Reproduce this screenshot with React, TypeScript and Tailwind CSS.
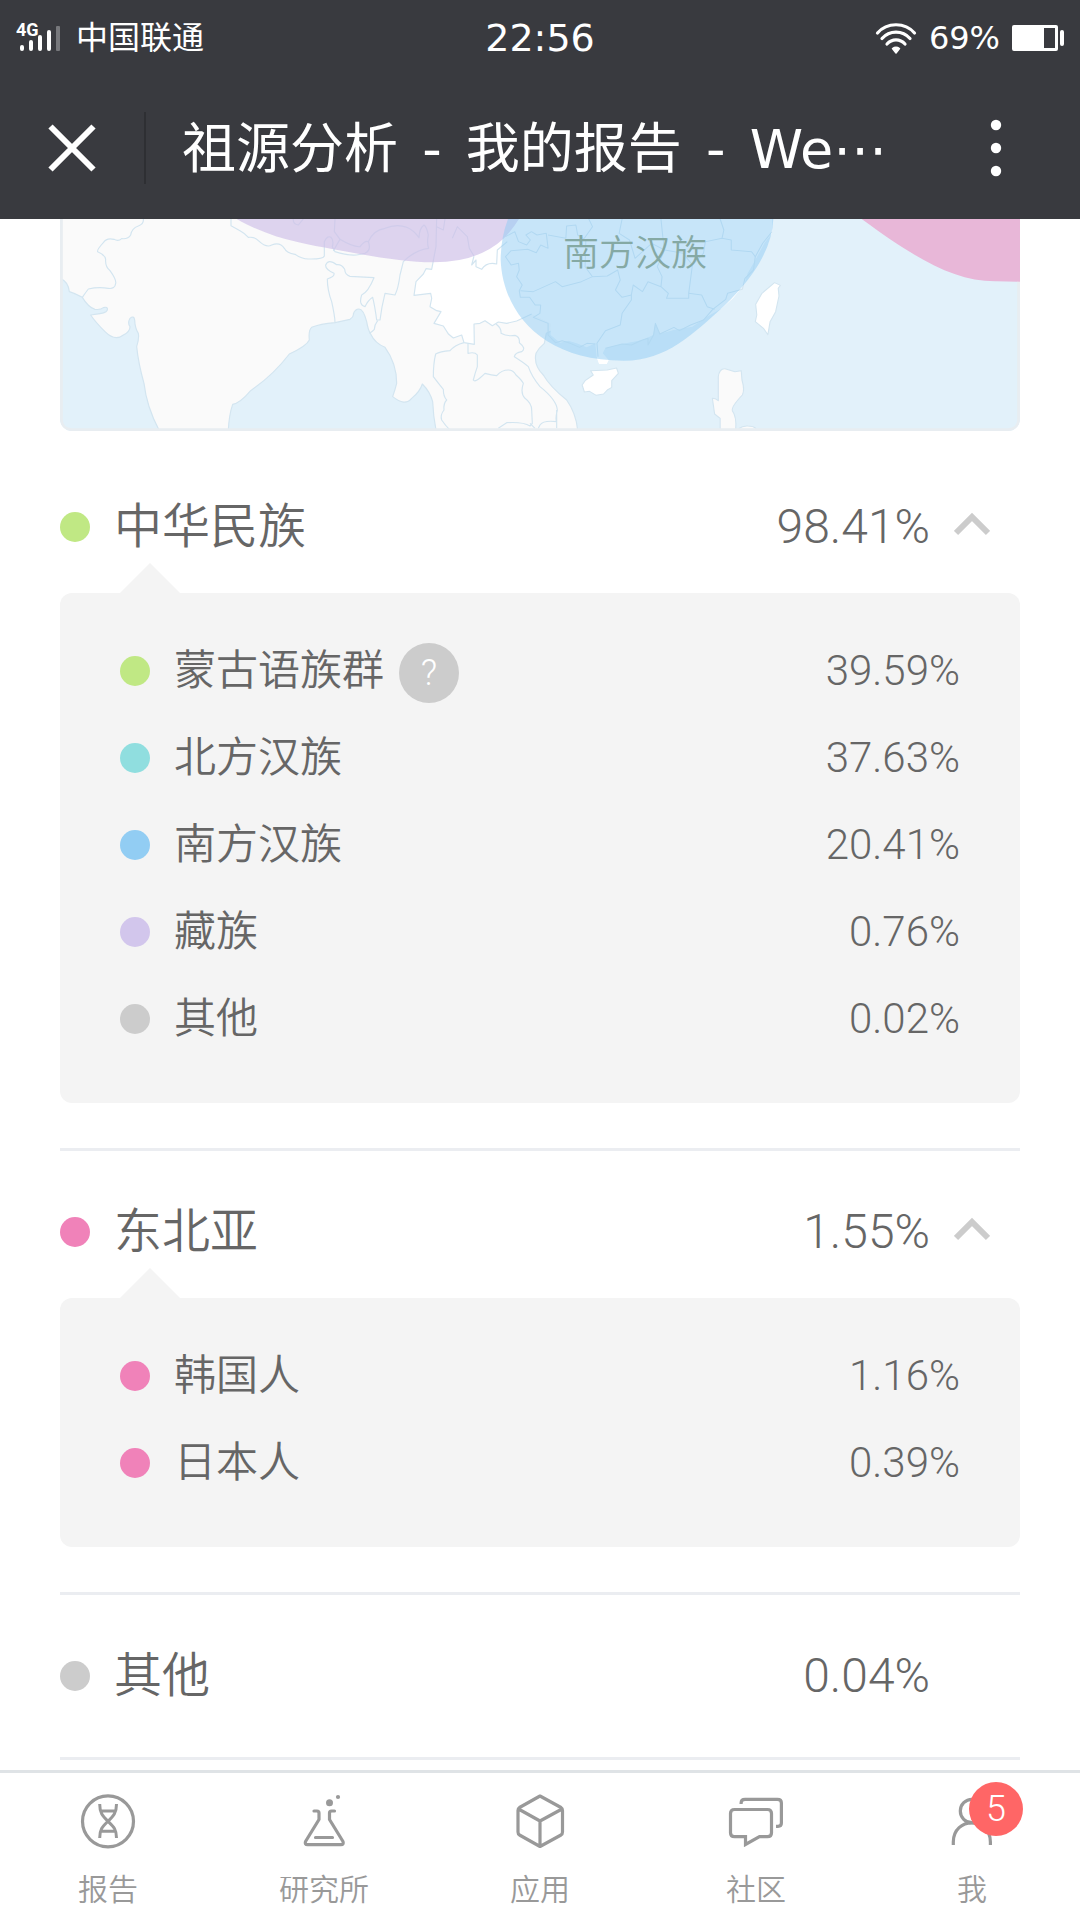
import { useState } from 'react';
import type { ReactNode } from 'react';
import clsx from 'clsx';

interface Item {
  name: string;
  value: string;
  color: string;
  help?: boolean;
}

interface Region {
  name: string;
  value: string;
  color: string;
  items: Item[];
}

const regions: Region[] = [
  {
    name: '中华民族',
    value: '98.41%',
    color: 'bg-[#c0e884]',
    items: [
      { name: '蒙古语族群', value: '39.59%', color: 'bg-[#c0e884]', help: true },
      { name: '北方汉族', value: '37.63%', color: 'bg-[#90dedf]' },
      { name: '南方汉族', value: '20.41%', color: 'bg-[#92cdf3]' },
      { name: '藏族', value: '0.76%', color: 'bg-[#d2c6ec]' },
      { name: '其他', value: '0.02%', color: 'bg-[#cccccc]' },
    ],
  },
  {
    name: '东北亚',
    value: '1.55%',
    color: 'bg-[#f082b9]',
    items: [
      { name: '韩国人', value: '1.16%', color: 'bg-[#f082b9]' },
      { name: '日本人', value: '0.39%', color: 'bg-[#f082b9]' },
    ],
  },
  { name: '其他', value: '0.04%', color: 'bg-[#cccccc]', items: [] },
];

function StatusBar() {
  return (
    <div className="grid grid-cols-3 items-center h-[76px] px-4 font-['DejaVu_Sans','Noto_Sans_CJK_SC',sans-serif]">
      <div className="flex items-center gap-4">
        <svg width="44" height="44" viewBox="0 -6 44 44" fill="#fff">
          <text x="0" y="14" fontSize="18" fontWeight="700" fontFamily="Roboto, sans-serif">
            4G
          </text>
          <rect x="4" y="23" width="4" height="6" rx="2" />
          <rect x="13" y="18" width="4" height="11" rx="2" />
          <rect x="22" y="13" width="4" height="16" rx="2" />
          <rect x="31" y="8" width="4" height="21" rx="2" />
          <rect x="40" y="4" width="4" height="25" rx="1" fill="#77787c" />
        </svg>
        <span className="text-[32px] leading-10">中国联通</span>
      </div>
      <span className="text-center text-[38px] leading-10">22:56</span>
      <div className="flex items-center justify-end gap-3">
        <svg width="42" height="34" viewBox="0 0 42 34" fill="none" stroke="#fff" strokeWidth="3.2" strokeLinecap="round">
          <path d="M2.500 12C12 1 30 1 39.500 12" />
          <path d="M7 17.500C14.500 9 27.500 9 35 17.500" />
          <path d="M12 23C17 17.500 25 17.500 30 23" />
          <path d="M17.500 27.500Q21 25 24.500 27.500L21 32Z" fill="#fff" strokeWidth="1.500" strokeLinejoin="round" />
        </svg>
        <span className="text-[32px] leading-10">69%</span>
        <svg width="52" height="26" viewBox="0 0 52 26" fill="#fff">
          <path fillRule="evenodd" d="M2 0H44a2 2 0 0 1 2 2V24a2 2 0 0 1-2 2H2a2 2 0 0 1-2-2V2a2 2 0 0 1 2-2ZM32 3V23H43V3Z" />
          <rect x="48" y="5" width="4" height="16" rx="2" />
        </svg>
      </div>
    </div>
  );
}

function TitleBar() {
  return (
    <div className="flex items-center h-[143px]">
      <button type="button" aria-label="关闭" className="flex items-center justify-center w-36 h-[72px] border-r-2 border-[#2e2f33] box-content">
        <svg width="48" height="48" viewBox="0 0 48 48" stroke="#fff" strokeWidth="6">
          <path d="M2.500 2.500L45.500 45.500M45.500 2.500L2.500 45.500" />
        </svg>
      </button>
      <h1 className="flex-1 pt-1 pl-9 text-[54px] leading-[72px] whitespace-nowrap font-['DejaVu_Sans','Noto_Sans_CJK_SC',sans-serif]">
        祖源分析 <span className="mx-[7px]">-</span> 我的报告 <span className="mx-[7px]">-</span> We⋯
      </h1>
      <button type="button" aria-label="更多" className="flex items-center justify-center w-[168px] h-[72px]">
        <svg width="12" height="58" viewBox="0 0 12 58" fill="#fff">
          <circle cx="6" cy="6" r="5.200" />
          <circle cx="6" cy="29" r="5.200" />
          <circle cx="6" cy="52" r="5.200" />
        </svg>
      </button>
    </div>
  );
}

function AncestryMap() {
  return (
    <svg viewBox="60 27 2880 636" className="block w-full rounded-b-xl" fill="none" stroke="#d3e5f0" strokeWidth="3.5" strokeLinejoin="round">
      <rect x="60" y="27" width="2880" height="636" fill="#e2f1fa" stroke="none" />

      {/* mainland */}
      <path
        fill="#fafafa"
        d="M60 0V205Q85 215 88 245Q105 250 127 262Q145 292 165 298Q182 300 190 293Q200 290 202 295Q205 307 180 311L152 315Q165 335 195 365Q225 395 250 375Q270 365 270 350Q262 340 270 325Q282 315 284 330Q285 355 295 370Q298 385 290 410Q295 460 312 520Q320 590 357 660H565Q567 615 578 583Q600 580 632 542Q700 495 748 432Q800 408 808 390Q805 360 815 352Q840 342 885 338L930 328Q942 320 940 312Q945 297 957 297Q970 297 980 335Q984 360 992 372Q1005 400 1035 412Q1070 460 1070 520Q1065 540 1058 560Q1095 590 1115 565Q1140 545 1147 522Q1170 545 1178 575Q1180 620 1188 660H1613Q1608 610 1580 570Q1530 530 1510 495Q1480 465 1488 430Q1495 415 1513 400L1519 370L1900 200V0Z"
      />

      {/* China */}
      <path
        fill="#fff"
        stroke="none"
        d="M1190 27L1188 110L1175 178L1158 176L1150 192L1128 215L1122 256L1172 250L1170 290L1203 305L1182 340L1210 348L1240 384L1265 375L1272 398L1303 403L1302 342L1320 340L1335 332L1357 347L1375 336L1400 340L1430 333L1475 312L1532 340V375L1560 398L1585 392L1610 400L1640 412L1666 400L1670 440L1678 462H1700L1706 450L1688 430L1696 415L1746 402L1807 390L1840 375L1846 340L1859 372L1901 360L1957 350L2001 320L2046 295L2079 265L2112 225L2123 190L2146 150L2173 100L2196 70V27Z"
      />

      {/* borders */}
      <path d="M310 27Q312 42 295 48Q275 55 272 75Q265 88 245 86Q235 95 222 88Q200 82 190 98Q170 120 173 125Q195 135 197 148Q195 170 210 182Q230 210 227 220Q225 238 205 235Q175 230 145 237Q135 250 127 262" />
      <path d="M573 27V47L600 62Q615 70 625 82Q645 80 655 92Q680 115 695 105Q720 95 733 115Q740 130 765 133Q785 147 805 147Q850 148 853 138V95Q862 75 873 82Q882 90 877 110L885 125Q920 137 950 135L975 130Q995 120 985 95Q1000 60 1035 55Q1070 40 1100 52Q1120 60 1137 83Q1138 55 1152 45Q1160 50 1165 75Q1160 100 1166 115Q1125 120 1090 155Q1085 175 1080 195Q1075 235 1065 255L1035 250Q1025 290 1020 330L1010 330Q1005 290 998 262Q985 270 975 290Q955 285 965 255Q985 245 1002 203L930 199Q915 195 914 178Q905 162 890 164Q865 145 857 165Q855 178 882 190Q885 200 862 207Q862 240 875 275Q885 320 885 338" />
      <path d="M1013 332Q1003 345 1003 358Q997 365 988 370M885 27L883 65L900 88L890 105L880 123M760 27Q758 42 775 45L790 27M900 88Q940 112 960 110Q975 90 985 95" />
      <path d="M1190 27L1188 110L1175 178L1158 176L1150 192L1128 215L1122 256L1172 250L1175 265L1170 290L1190 302L1203 305L1182 340L1210 348L1225 372L1240 384L1265 375L1272 398L1303 403L1302 342L1320 340L1335 332L1357 347L1375 336L1400 340L1430 333L1475 312" />
      <path d="M1272 398Q1245 405 1230 422Q1200 425 1187 432Q1180 460 1180 500Q1195 520 1210 538Q1210 560 1220 570Q1210 580 1212 600Q1200 615 1205 630Q1215 645 1228 658" />
      <path d="M1284 400V430Q1305 425 1312 435V470Q1305 490 1300 510Q1305 520 1335 490Q1355 495 1370 497Q1385 480 1405 480Q1420 480 1428 495Q1445 510 1450 520Q1440 550 1455 565Q1475 580 1475 600L1477 640L1470 648Q1450 635 1400 638L1375 655M1470 640L1485 655" />
      <path d="M1368 342Q1385 355 1383 370Q1400 380 1425 376Q1440 380 1438 398Q1460 415 1445 425Q1425 428 1423 440Q1455 460 1465 470Q1475 500 1500 530Q1550 570 1552 600Q1545 630 1550 635Q1510 630 1500 645L1495 655M1550 600V655" />
      <path d="M1190 50L1210 60L1215 27M1237 85L1252 50L1282 80L1288 115L1302 138M1302 138L1295 165L1308 150V170L1325 178Q1340 155 1370 162L1372 120L1402 95" />

      {/* province lines under the southern Han area */}
      <g transform="translate(1380 0) scale(1.11 1)" strokeWidth="3">
        <path d="M15 80L40 65L50 95L72 105L82 90L70 75L85 65L100 75L125 70L130 115L110 105L98 128L75 118L30 122L15 140L30 165L50 160L52 180L45 200L60 225L52 242L55 262L80 262L95 285L110 285L108 310L90 322L130 340V375L150 398L168 392L190 400L215 412L235 400L258 402" />
        <path d="M55 242L90 245L150 215L168 230L220 215L250 200L230 170L232 90L210 75L205 45L180 48L178 85L130 75" />
        <path d="M240 27L250 50L228 85M250 200L290 198L318 180L325 210L312 240L330 262L355 255V270L330 310L325 345L285 362L262 400L265 440" />
        <path d="M330 27L322 70L350 90L365 145L410 100L445 120L425 170L438 200L435 230L400 215L385 245L360 225L355 255M435 230L455 250L450 265L510 265V250L545 255L560 290L580 298" />
        <path d="M435 27L440 80L445 120L495 130L520 165L510 250M595 27L605 60L600 85L555 95L550 130L520 165M600 85L625 90V120L680 125L690 140" />
        <path d="M285 415L330 402L355 405L385 390L400 385V405L415 375L420 340L432 372L470 352L485 362L515 345L550 330L575 298L610 268L615 250L655 238L662 205L685 180L690 140L710 100L735 65" />
        <path fill="#fff" d="M245 482L290 480L315 474L320 490L302 512V532L290 540L280 552L260 556L242 544L228 546L222 525L230 512L252 495Z" />
        <path fill="#fff" d="M742 218L758 226L752 235L754 258L745 305L730 335L724 374L712 355L690 335L694 315L691 283L708 250Z" />
        <path fill="#fafafa" d="M595 660V625L580 612L574 565Q582 565 590 572V500Q593 475 608 476L635 485L652 482L654 510Q662 540 655 555Q625 590 628 602Q640 620 637 660ZM645 656Q655 647 670 648Q685 648 692 656" />
        <path fill="#fff" stroke="none" d="M262 445L268 462H288L293 450Z" />
      </g>

      <path d="M64 27V627Q64 659 96 659H2904Q2936 659 2936 627V27" stroke="#e8edf1" strokeWidth="9" />

      <g stroke="none">
        <path fill="#cfc0e8" fillOpacity=".68" d="M590 27C700 90 800 102 880 118C1000 140 1100 157 1180 157Q1315 157 1392 85Q1420 55 1437 27Z" />
        <path fill="#8fccf3" fillOpacity=".5" d="M1404 27Q1382 85 1382 150C1388 300 1500 452 1752 452C1880 452 1960 370 2050 290Q2196 150 2200 27Z" />
        <path fill="#e8b7d8" d="M2465 27C2620 140 2740 216 2870 214L2940 215V27Z" />
        <text x="1569" y="168" fontSize="108" fill="#85a9a4" fontWeight="350" fontFamily="'Noto Sans CJK SC', sans-serif">
          南方汉族
        </text>
      </g>
    </svg>
  );
}

function Dot({ color }: { color: string }) {
  return <span className={clsx('size-[30px] shrink-0 rounded-full', color)} />;
}

function ItemRow({ name, value, color, help }: Item) {
  return (
    <li className="flex items-center gap-6 h-[87px] text-[42px]">
      <Dot color={color} />
      <div className="flex flex-1 items-center gap-[15px]">
        <span className="font-[350]">{name}</span>
        {help && (
          <button type="button" aria-label="说明" className="size-[60px] mt-1 rounded-full bg-[#cccccc] text-white text-4xl font-light">
            ?
          </button>
        )}
      </div>
      <span>{value}</span>
    </li>
  );
}

function RegionSection({ name, value, color, items }: Region) {
  const [open, setOpen] = useState(true);
  const expanded = open && items.length > 0;

  return (
    <section className={clsx('border-b-[3px] border-[#ebedf1]', expanded && 'pb-[45px]')}>
      <button
        type="button"
        aria-expanded={expanded}
        onClick={() => setOpen(!open)}
        className={clsx('flex w-full items-center gap-6 pt-[45px] pr-[30px] text-5xl leading-[72px] text-left font-light', expanded ? 'pb-[30px]' : 'pb-[45px]')}
      >
        <Dot color={color} />
        <span className="flex-1 font-[350]">{name}</span>
        <span>{value}</span>
        <svg width="36" height="30" viewBox="0 0 36 30" fill="none" stroke="#cccccc" strokeWidth="6" className={clsx(items.length === 0 && 'invisible', !open && 'rotate-180')}>
          <path d="M2 21L18 5L34 21" />
        </svg>
      </button>
      {expanded && (
        <ul className="relative rounded-xl bg-[#f4f4f4] px-[60px] pt-[34px] pb-[41px]">
          <li aria-hidden="true" className="absolute bottom-full left-[60px] border-x-[30px] border-b-[30px] border-x-transparent border-b-[#f4f4f4]" />
          {items.map((item) => (
            <ItemRow key={item.name} {...item} />
          ))}
        </ul>
      )}
    </section>
  );
}

interface TabProps {
  label: string;
  badge?: number;
  children: ReactNode;
}

function Tab({ label, badge, children }: TabProps) {
  return (
    <a href="#" className="flex flex-1 flex-col items-center gap-[18px] pt-5 pb-2">
      <span className="relative">
        <svg width="56" height="56" viewBox="0 0 56 56" fill="none" stroke="#999999" strokeWidth="3.2" strokeLinejoin="round">
          {children}
        </svg>
        {badge && (
          <span className="absolute -top-[11px] left-[25px] flex items-center justify-center size-[54px] rounded-full bg-[#ff6666] text-white text-4xl">
            {badge}
          </span>
        )}
      </span>
      <span className="text-3xl leading-[45px] font-[350]">{label}</span>
    </a>
  );
}

function TabBar() {
  return (
    <nav className="flex mt-auto border-t-[3px] border-[#dfe3e6] bg-white text-[#999999]">
      <Tab label="报告">
        <circle cx="28" cy="28.300" r="25.500" />
        <path strokeWidth="3" d="M19.700 11C19.700 20 22.500 23 28 28.300S36.500 36 36.500 45M36.500 11C36.500 20 33.500 23 28 28.300S19.700 36 19.700 45M21 18H35M21 38.300H35" />
      </Tab>
      <Tab label="研究所">
        <path strokeLinecap="round" d="M18 18H21Q23 18 23 20V26.500L9.500 48.500Q8.500 51.700 11.500 51.700H45Q48 51.700 47 48.500L33.500 26.500V20Q33.500 18 35.500 18H38.500M19.500 44.500H36.500" />
        <circle cx="33.500" cy="9.700" r="3.500" fill="#999999" stroke="none" />
        <circle cx="42" cy="4" r="2.100" fill="#999999" stroke="none" />
      </Tab>
      <Tab label="应用">
        <path d="M28 3L49 14.500Q50.500 15.500 50.500 17.500V39Q50.500 41 49 42L28 53.500L7.500 42Q6 41 6 39V17.500Q6 15.500 7.500 14.500ZM6.500 16L28 28L50 16M28 28V53.500" />
      </Tab>
      <Tab label="社区">
        <path strokeLinejoin="miter" d="M6.500 16.500H39.500Q43.500 16.500 43.500 20.500V39.700Q43.500 43.700 39.500 43.700H31.500L17.500 51.500V43.700H6.500Q2.500 43.700 2.500 39.700V20.500Q2.500 16.500 6.500 16.500Z" />
        <path d="M13.100 11V10Q13.100 6.300 17 6.300H49.500Q53.400 6.300 53.400 10V30Q53.400 33.300 50 33.300H48" />
      </Tab>
      <Tab label="我" badge={5}>
        <circle cx="28" cy="18" r="11.700" />
        <path d="M9.300 52V49C9.300 23.500 46.400 23.500 46.400 49V52" />
      </Tab>
    </nav>
  );
}

export default function App() {
  return (
    <div className="flex flex-col min-h-screen bg-white text-[#666666] font-light font-['Roboto','Noto_Sans_CJK_SC',sans-serif]">
      <header className="bg-[#393a3f] text-white font-normal">
        <StatusBar />
        <TitleBar />
      </header>
      <main className="px-[60px]">
        <AncestryMap />
        <div className="pt-[15px]">
          {regions.map((region) => (
            <RegionSection key={region.name} {...region} />
          ))}
        </div>
      </main>
      <TabBar />
    </div>
  );
}
